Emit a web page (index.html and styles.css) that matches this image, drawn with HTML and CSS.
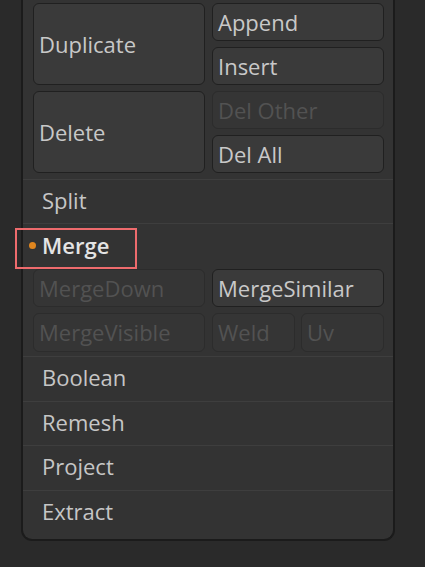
FILE: index.html
```html
<!DOCTYPE html>
<html>
<head>
<meta charset="utf-8">
<link rel="stylesheet" href="styles.css">
</head>
<body>
<div class="page">
  <div class="panel">
    <div class="grid top-grid">
      <div class="btn tall">Duplicate</div>
      <div class="btn">Append</div>
      <div class="btn">Insert</div>
      <div class="btn tall">Delete</div>
      <div class="btn off">Del Other</div>
      <div class="btn">Del All</div>
    </div>
    <div class="row short">Split</div>
    <div class="row merge">
      <span class="dot"></span>
      <span class="merge-label">Merge</span>
      <span class="highlight"></span>
    </div>
    <div class="grid merge-grid">
      <div class="btn off">MergeDown</div>
      <div class="btn">MergeSimilar</div>
      <div class="btn off">MergeVisible</div>
      <div class="pair">
        <div class="btn off">Weld</div>
        <div class="btn off">Uv</div>
      </div>
    </div>
    <div class="row">Boolean</div>
    <div class="row short">Remesh</div>
    <div class="row">Project</div>
    <div class="row last">Extract</div>
  </div>
</div>
</body>
</html>
```
FILE: styles.css
```css
* { box-sizing: border-box; }
html, body {
  margin: 0;
  padding: 0;
  background: #2a2a2a;
  width: 425px;
  height: 567px;
  overflow: hidden;
}
body {
  font-family: "Open Sans", "DejaVu Sans", sans-serif;
  font-size: 22px;
  line-height: 1;
  color: #c6c6c6;
}
.page {
  padding-left: 21px;
}
.panel {
  width: 374px;
  background: #333333;
  border: 2px solid #1b1b1b;
  border-top: none;
  border-radius: 0 0 11px 11px;
  padding-top: 3px;
}
.grid {
  display: grid;
  grid-template-columns: 172px 172px;
  column-gap: 7px;
  margin-left: 10px;
}
.top-grid {
  grid-template-rows: repeat(4, 38px);
  row-gap: 6px;
}
.top-grid > :nth-child(1) { grid-column: 1; grid-row: 1 / 3; }
.top-grid > :nth-child(2) { grid-column: 2; grid-row: 1; }
.top-grid > :nth-child(3) { grid-column: 2; grid-row: 2; }
.top-grid > :nth-child(4) { grid-column: 1; grid-row: 3 / 5; }
.top-grid > :nth-child(5) { grid-column: 2; grid-row: 3; }
.top-grid > :nth-child(6) { grid-column: 2; grid-row: 4; }
.btn {
  display: flex;
  align-items: center;
  padding-left: 5px;
  padding-bottom: 1px;
  background: #3a3a3a;
  border: 1px solid #202020;
  border-radius: 6px;
  color: #c8c8c8;
  white-space: nowrap;
  overflow: hidden;
}
.btn.off {
  background: #353535;
  border-color: #2c2c2c;
  color: #525252;
}
.row {
  height: 45px;
  border-top: 1px solid #3e3e3e;
  display: flex;
  align-items: center;
  padding-left: 19px;
  padding-bottom: 4px;
  color: #c6c6c6;
}
.row.short { height: 44px; }
.top-grid + .row { margin-top: 6px; }
.row.merge {
  position: relative;
  height: 45px;
  padding-left: 0;
  padding-bottom: 2px;
}
.dot {
  width: 7px;
  height: 7px;
  border-radius: 50%;
  background: #e0861f;
  margin-left: 6px;
  margin-right: 6px;
}
.merge-label {
  color: #e4e4e4;
  font-weight: 600;
}
.highlight {
  position: absolute;
  left: -8px;
  top: 4px;
  width: 122px;
  height: 41px;
  border: 2px solid #ee6b6d;
}
.merge-grid {
  margin-top: 1px;
  grid-template-rows: 38px 39px;
  row-gap: 6px;
  margin-bottom: 4px;
}
.pair {
  display: grid;
  grid-template-columns: 1fr 1fr;
  column-gap: 6px;
}
.row.last {
  height: 49px;
  padding-bottom: 8px;
}
```
